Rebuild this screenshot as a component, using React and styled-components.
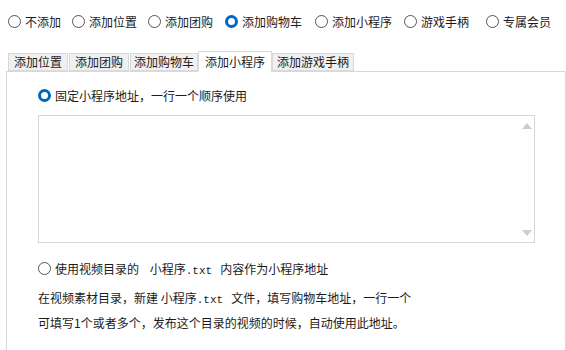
import styled, { createGlobalStyle } from 'styled-components';

const Global = createGlobalStyle`
    body {
        margin: 0;
        background: #fff;
        font-family: "Noto Sans CJK SC", "Noto Sans", sans-serif;
        font-size: 12px;
        color: #1a1a1a;
    }
`;

const topOptions = [
    { label: '不添加', w: 64 },
    { label: '添加位置', w: 76 },
    { label: '添加团购', w: 77 },
    { label: '添加购物车', w: 90, checked: true },
    { label: '添加小程序', w: 89 },
    { label: '游戏手柄', w: 82 },
    { label: '专属会员', w: 70 },
];

const tabs = ['添加位置', '添加团购', '添加购物车', '添加小程序', '添加游戏手柄'];
const activeTab = 3;

const Radio = ({ checked }) => (
    <RadioDot $checked={checked} />
);

const App = () => {
    return (
        <Page>
            <Global />
            <TopRow>
                {topOptions.map((o) => (
                    <Option key={o.label} $w={o.w}>
                        <Radio checked={o.checked} />
                        <span>{o.label}</span>
                    </Option>
                ))}
            </TopRow>
            <TabStrip>
                {tabs.map((t, i) => (
                    <Tab key={t} $active={i === activeTab}>{t}</Tab>
                ))}
            </TabStrip>
            <Panel>
                <Option>
                    <Radio checked />
                    <span>固定小程序地址，一行一个顺序使用</span>
                </Option>
                <AreaBox>
                    <Area />
                    <ScrollCol>
                        <svg width="10" height="6" viewBox="0 0 10 6"><path d="M0 6 L5 0 L10 6 Z" fill="#cdcdcd" /></svg>
                        <svg width="10" height="6" viewBox="0 0 10 6"><path d="M0 0 L10 0 L5 6 Z" fill="#cdcdcd" /></svg>
                    </ScrollCol>
                </AreaBox>
                <Option $top={17}>
                    <Radio />
                    <span>使用视频目录的&nbsp;&nbsp;&nbsp; 小程序<Mono>.txt</Mono>&nbsp;&nbsp; 内容作为小程序地址</span>
                </Option>
                <Note>
                    <Line>在视频素材目录，新建 小程序<Mono>.txt</Mono>&nbsp;&nbsp; 文件，填写购物车地址，一行一个</Line>
                    <Line>可填写1个或者多个，发布这个目录的视频的时候，自动使用此地址。</Line>
                </Note>
            </Panel>
        </Page>
    );
};
export default App;

const Page = styled.div`
    width: 566px;
    height: 350px;
    overflow: hidden;
    display: flex;
    flex-direction: column;
`;
const TopRow = styled.div`
    display: flex;
    align-items: center;
    padding: 13px 0 0 8px;
    height: 17px;
`;
const Option = styled.label`
    display: flex;
    align-items: center;
    gap: 4px;
    width: ${(p) => (p.$w ? `${p.$w}px` : 'auto')};
    margin-top: ${(p) => (p.$top ? `${p.$top}px` : '0')};
    flex-shrink: 0;
    height: 17px;
    line-height: 17px;
    white-space: nowrap;
`;
const RadioDot = styled.span`
    box-sizing: border-box;
    width: 13px;
    height: 13px;
    border-radius: 50%;
    flex-shrink: 0;
    border: ${(p) => (p.$checked ? '3.5px solid #0067c0' : '1px solid #555')};
    background: #fff;
`;
const TabStrip = styled.div`
    display: flex;
    align-items: flex-end;
    padding: 21px 0 0 8px;
    height: 20px;
    position: relative;
    z-index: 1;
`;
const Tab = styled.div`
    box-sizing: border-box;
    height: ${(p) => (p.$active ? '21px' : '18px')};
    padding: ${(p) => (p.$active ? '0 6px' : '0 5px')};
    margin: ${(p) => (p.$active ? '0 0 -1px -1px' : '0 1px 0 0')};
    background: ${(p) => (p.$active ? '#fff' : '#f0f0f0')};
    border: 1px solid #d9d9d9;
    border-bottom: ${(p) => (p.$active ? '1px solid #fff' : '1px solid #d9d9d9')};
    line-height: ${(p) => (p.$active ? '19px' : '16px')};
    white-space: nowrap;
    &:first-child {
        padding: 0 5px;
    }
    &:nth-child(3) {
        padding: 0 3px;
    }
    &:last-child {
        padding: 0 4px;
    }
`;
const Panel = styled.div`
    flex: 1;
    margin-left: 6px;
    border: 1px solid #d9d9d9;
    border-bottom: none;
    padding: 15px 0 0 31px;
    display: flex;
    flex-direction: column;
    align-items: flex-start;
`;
const AreaBox = styled.div`
    box-sizing: border-box;
    width: 497px;
    height: 128px;
    margin-top: 11px;
    border: 1px solid #d6d6d6;
    display: flex;
`;
const Area = styled.textarea`
    flex: 1;
    border: none;
    outline: none;
    resize: none;
    background: #fff;
`;
const ScrollCol = styled.div`
    width: 15px;
    display: flex;
    flex-direction: column;
    justify-content: space-between;
    align-items: center;
    padding: 7px 0 6px;
`;
const Mono = styled.span`
    font-family: "Liberation Mono", "DejaVu Sans Mono", monospace;
    font-size: 11px;
    line-height: 1;
`;
const Note = styled.div`
    margin-top: 12px;
    display: flex;
    flex-direction: column;
    gap: 8px;
`;
const Line = styled.div`
    height: 17px;
    line-height: 17px;
    white-space: nowrap;
`;
